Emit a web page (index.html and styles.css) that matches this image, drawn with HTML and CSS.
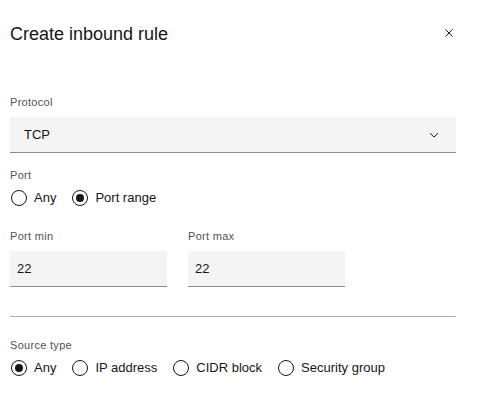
FILE: index.html
```html
<!DOCTYPE html>
<html lang="en">
<head>
<meta charset="utf-8">
<title>Create inbound rule</title>
<link rel="stylesheet" href="styles.css">
</head>
<body>
<div class="modal">
  <header class="modal-header">
    <h2 class="modal-title">Create inbound rule</h2>
    <button class="close-btn" aria-label="Close">
      <svg width="16" height="16" viewBox="0 0 16 16"><path d="M4.4 4.4 L11.6 11.6 M11.6 4.4 L4.4 11.6" stroke="#161616" stroke-width="1" fill="none"/></svg>
    </button>
  </header>

  <div class="field field-protocol">
    <div class="label">Protocol</div>
    <div class="select">
      <span class="select-value">TCP</span>
      <svg class="chevron" width="10" height="8" viewBox="0 0 10 8"><path d="M1 2.2 L5 6 L9 2.2" stroke="#161616" stroke-width="1" fill="none"/></svg>
    </div>
  </div>

  <div class="field field-port">
    <div class="label">Port</div>
    <div class="radio-group">
      <label class="radio"><span class="radio-circle"></span><span class="radio-text">Any</span></label>
      <label class="radio"><span class="radio-circle checked"></span><span class="radio-text">Port range</span></label>
    </div>
  </div>

  <div class="port-inputs">
    <div class="field">
      <div class="label">Port min</div>
      <div class="text-input">22</div>
    </div>
    <div class="field">
      <div class="label">Port max</div>
      <div class="text-input">22</div>
    </div>
  </div>

  <hr class="divider">

  <div class="field field-source">
    <div class="label">Source type</div>
    <div class="radio-group">
      <label class="radio"><span class="radio-circle checked"></span><span class="radio-text">Any</span></label>
      <label class="radio"><span class="radio-circle"></span><span class="radio-text">IP address</span></label>
      <label class="radio"><span class="radio-circle"></span><span class="radio-text">CIDR block</span></label>
      <label class="radio"><span class="radio-circle"></span><span class="radio-text">Security group</span></label>
    </div>
  </div>
</div>
</body>
</html>
```

FILE: styles.css
```css
* { box-sizing: border-box; }

html, body {
  margin: 0;
  padding: 0;
  background: #ffffff;
}

body {
  font-family: "Liberation Sans", Arial, sans-serif;
  color: #161616;
}

.modal {
  width: 481px;
  padding: 22px 25px 0 10px;
}

.modal-header {
  display: flex;
  align-items: center;
  justify-content: space-between;
  margin-right: -1px;
}

.modal-title {
  margin: 0;
  font-size: 18px;
  font-weight: 400;
  line-height: 24px;
  color: #161616;
}

.close-btn {
  width: 16px;
  height: 16px;
  padding: 0;
  border: 0;
  background: transparent;
  display: flex;
  margin-top: -2px;
}

.label {
  font-size: 11px;
  line-height: 14px;
  letter-spacing: 0.3px;
  color: #525252;
  margin-bottom: 8px;
}

.field-protocol { margin-top: 49px; }

.select {
  height: 36px;
  background: #f4f4f4;
  border-bottom: 1px solid #8d8d8d;
  display: flex;
  align-items: center;
  justify-content: space-between;
  padding: 0 17px 0 14px;
}

.select-value {
  font-size: 13px;
  color: #161616;
}

.chevron { display: block; }

.field-port { margin-top: 15px; }

.radio-group {
  display: flex;
  align-items: center;
  gap: 15px;
  height: 16px;
}

.radio {
  display: flex;
  align-items: center;
  font-size: 13px;
  line-height: 16px;
  color: #161616;
}

.radio-circle {
  width: 16px;
  height: 16px;
  margin-left: 1px;
  margin-right: 7px;
  border: 1px solid #161616;
  border-radius: 50%;
  position: relative;
  flex: none;
}

.radio-circle.checked::before {
  content: "";
  position: absolute;
  left: 3px;
  top: 3px;
  width: 8px;
  height: 8px;
  border-radius: 50%;
  background: #161616;
}

.port-inputs {
  display: flex;
  gap: 21px;
  margin-top: 23px;
}

.port-inputs .field { width: 157px; }

.text-input {
  height: 36px;
  background: #f4f4f4;
  border-bottom: 1px solid #8d8d8d;
  display: flex;
  align-items: center;
  padding-left: 7px;
  font-size: 13px;
  color: #161616;
}

.divider {
  margin: 29px 0 0 0;
  border: 0;
  height: 1px;
  background: #a2afbb;
}

.field-source { margin-top: 21px; }
```
